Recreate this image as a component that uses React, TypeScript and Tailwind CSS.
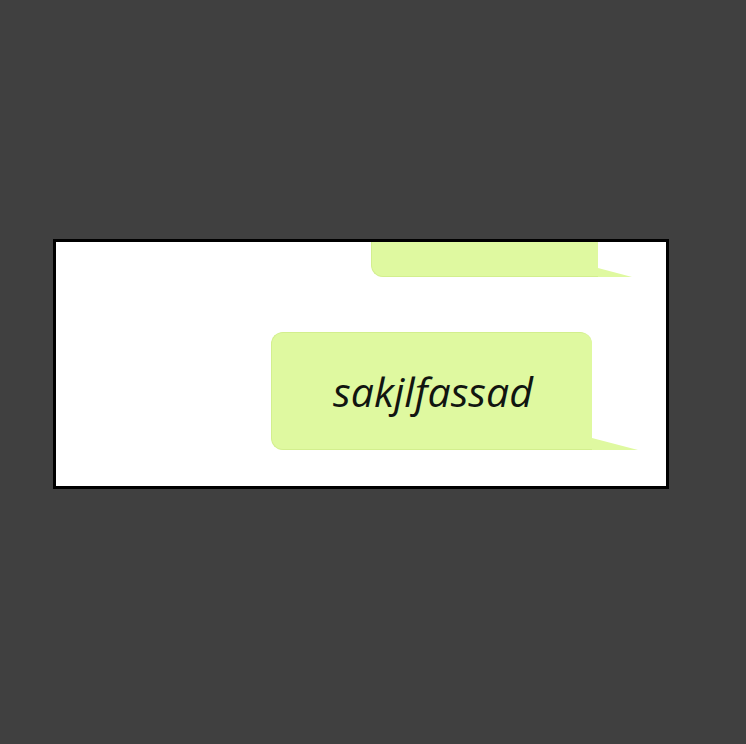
import { FC } from 'react';

type BubbleProps = {
  text?: string;
  width: string;
  height: string;
  tail: string;
  marginRight: string;
};

const Bubble: FC<BubbleProps> = ({ text, width, height, tail, marginRight }) => (
  <div className={`flex items-end justify-end ${marginRight}`}>
    <div
      className={`${width} ${height} flex items-center justify-center rounded-t-[12px] rounded-bl-[12px] bg-[#dff9a0] border border-[#d3ef8e] border-r-0`}
    >
      {text && (
        <span
          className="text-[41px] italic text-[#111510] leading-none pl-[2px]"
          style={{ fontFamily: '"Open Sans", "Noto Sans", sans-serif' }}
        >
          {text}
        </span>
      )}
    </div>
    <div className={`${tail} bg-[#dff9a0] [clip-path:polygon(0_0,100%_100%,0_100%)]`} />
  </div>
);

export default function App() {
  return (
    <div className="w-[746px] h-[744px] bg-[#404040] pt-[239px] pl-[53px]">
      <div className="w-[616px] h-[250px] border-[3px] border-black bg-white overflow-hidden flex flex-col">
        <div className="-mt-[20px]">
          <Bubble width="w-[227px]" height="h-[55px]" tail="w-[34px] h-[9px]" marginRight="mr-[34px]" />
        </div>
        <div className="mt-[55px]">
          <Bubble
            text="sakjlfassad"
            width="w-[321px]"
            height="h-[118px]"
            tail="w-[46px] h-[12px]"
            marginRight="mr-[28px]"
          />
        </div>
      </div>
    </div>
  );
}
